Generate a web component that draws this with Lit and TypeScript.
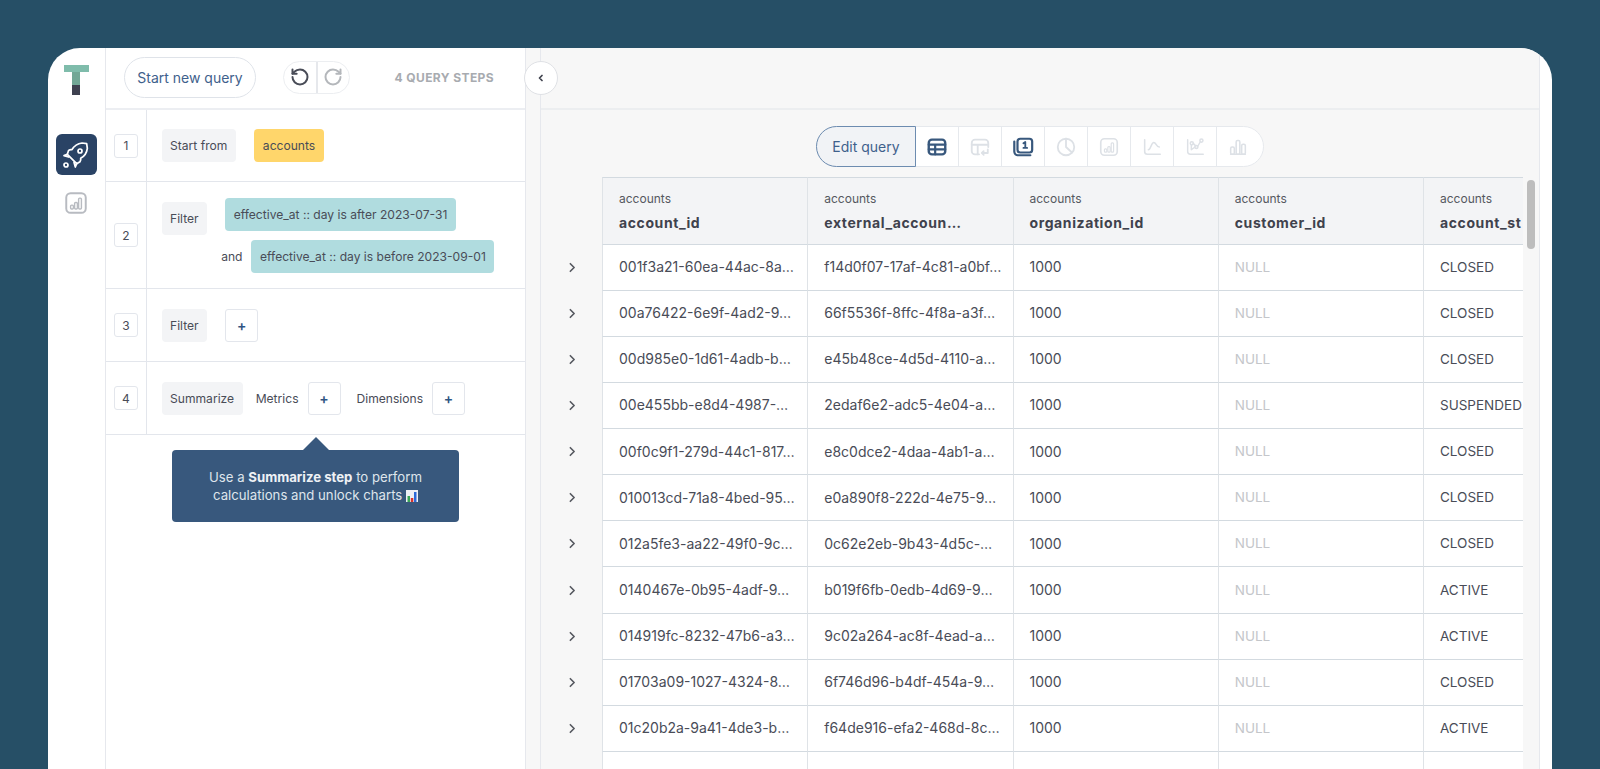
import { LitElement, html, css, svg } from "lit";
import { customElement } from "lit/decorators.js";

const rows: [string, string, string][] = [
  ["001f3a21-60ea-44ac-8a…", "f14d0f07-17af-4c81-a0bf…", "CLOSED"],
  ["00a76422-6e9f-4ad2-9…", "66f5536f-8ffc-4f8a-a3f…", "CLOSED"],
  ["00d985e0-1d61-4adb-b…", "e45b48ce-4d5d-4110-a…", "CLOSED"],
  ["00e455bb-e8d4-4987-…", "2edaf6e2-adc5-4e04-a…", "SUSPENDED"],
  ["00f0c9f1-279d-44c1-817…", "e8c0dce2-4daa-4ab1-a…", "CLOSED"],
  ["010013cd-71a8-4bed-95…", "e0a890f8-222d-4e75-9…", "CLOSED"],
  ["012a5fe3-aa22-49f0-9c…", "0c62e2eb-9b43-4d5c-…", "CLOSED"],
  ["0140467e-0b95-4adf-9…", "b019f6fb-0edb-4d69-9…", "ACTIVE"],
  ["014919fc-8232-47b6-a3…", "9c02a264-ac8f-4ead-a…", "ACTIVE"],
  ["01703a09-1027-4324-8…", "6f746d96-b4df-454a-9…", "CLOSED"],
  ["01c20b2a-9a41-4de3-b…", "f64de916-efa2-468d-8c…", "ACTIVE"],
  ["", "", ""],
];
const heads = ["account_id", "external_accoun…", "organization_id", "customer_id", "account_st"];

const ic = (body: unknown, cls = "", size = 20) =>
  html`<svg class=${cls} width=${size} height=${size} viewBox="0 0 24 24" fill="none" stroke="currentColor" stroke-width="2" stroke-linecap="round" stroke-linejoin="round">${body}</svg>`;

const rocket = svg`<path stroke-width="1.300" d="M5.500 11.500l7 7l2.500-1.500a3 3 0 0 0 .500-2.500a10 10 0 0 0 5-7.500l-.500-3.500l-3.500-.500a10 10 0 0 0-7.500 5a3 3 0 0 0-2.500.500z"/><path stroke-width="1.300" d="M5.500 11.500L3 12.500l3.500 1M12.500 18.500l-1 2.500l-1-3.500"/><circle stroke-width="1.300" cx="15" cy="9" r="1.500"/><circle stroke-width="1.300" cx="4.500" cy="19.500" r="1.500"/>`;
const boxChart = svg`<rect x="3" y="3" width="18" height="18" rx="4" stroke-width="1.800"/><rect x="7" y="14" width="2.600" height="3.500" rx="1" stroke-width="1.300"/><rect x="10.700" y="11.500" width="2.600" height="6" rx="1" stroke-width="1.300"/><rect x="14.400" y="7.500" width="2.600" height="10" rx="1" stroke-width="1.300"/>`;
const undo = svg`<path d="M3 12a9 9 0 1 0 9-9 9.750 9.750 0 0 0-6.740 2.740L3 8" stroke-width="2.400"/><path d="M3 3v5h5" stroke-width="2.400"/>`;
const redo = svg`<path d="M21 12a9 9 0 1 1-9-9 9.750 9.750 0 0 1 6.740 2.740L21 8" stroke-width="2.400"/><path d="M21 3v5h-5" stroke-width="2.400"/>`;
const tableIc = svg`<rect x="3" y="4" width="18" height="16" rx="3.500" stroke-width="2.600"/><path d="M3 9.500h18M3 14.500h18M10 9.500V20" stroke-width="2.400"/>`;
const pivot = svg`<path d="M11 20H6.500A3.500 3.500 0 0 1 3 16.500V7.500A3.500 3.500 0 0 1 6.500 4h11A3.500 3.500 0 0 1 21 7.500V12"/><path d="M3 9.500h18M9.500 9.500V20"/><path d="M14 18.500h6.500M20.500 14.500v4M14 18.500l2-2M14 18.500l2 2"/>`;
const counter = svg`<rect x="6" y="3" width="16" height="15" rx="3" stroke-width="2.400"/><path d="M2.500 6v11a4 4 0 0 0 4 4H20" stroke-width="2.400"/><path d="M12.500 8l2-1.500V13M12.500 13h4" stroke-width="2"/>`;
const pie = svg`<circle cx="12" cy="12" r="9"/><path d="M12 3v9l6.500 6"/>`;
const line = svg`<path d="M4 4v13a3 3 0 0 0 3 3h14" stroke-width="1.700"/><path d="M8 15c3 0 3-8 6-8c2.500 0 2.500 5 6 5" stroke-width="1.700"/>`;
const scatter = svg`<g stroke-width="1.600"><path d="M4 4v13a3 3 0 0 0 3 3h14"/><path d="M8 10v5l4-3M10 8l2.500 2.500M14.500 12l3.500-6"/><circle cx="8.500" cy="8" r="1.700"/><circle cx="13.500" cy="12" r="1.700"/><circle cx="19" cy="5" r="1.700"/></g>`;
const bars = svg`<path d="M4 20h16" stroke-width="1.700"/><g stroke-width="1.700"><rect x="4" y="12" width="4" height="8" rx="1.500"/><rect x="10" y="5" width="4" height="15" rx="1.500"/><rect x="16" y="9" width="4" height="11" rx="1.500"/></g>`;
const chev = svg`<path d="M8 5l7 7-7 7" stroke-width="3"/>`;

@customElement("app-root")
export class AppRoot extends LitElement {
  static styles = css`
    :host {
      display: block;
      height: 769px;
      overflow: hidden;
      box-sizing: border-box;
      padding: 48px 48px 0;
      background: #264f66;
      font-family: "Inter", "Noto Sans", sans-serif;
      color: #494c57;
    }
    .card {
      position: relative;
      display: flex;
      height: 721px;
      background: #fff;
      border-radius: 32px 32px 0 0;
      overflow: hidden;
    }
    .side {
      flex: none;
      width: 57px;
      border-right: 1px solid #e6e8ed;
      display: flex;
      flex-direction: column;
      align-items: center;
      padding-top: 17px;
      box-sizing: content-box;
    }
    .logo {
      display: flex;
      flex-direction: column;
      align-items: center;
      margin-left: -1px;
    }
    .logo-top { width: 25px; height: 7px; background: #7fbcab; }
    .logo-mid { width: 8px; height: 13px; background: #72a796; }
    .logo-bot { width: 8px; height: 10px; background: #3e4150; }
    .tile {
      width: 41px;
      height: 41px;
      margin-top: 39px;
      margin-left: -1px;
      background: #2a4365;
      border-radius: 6px;
      color: #fff;
      display: flex;
      align-items: center;
      justify-content: center;
    }
    .chart { margin-top: 15px; margin-left: -1px; color: #b8bbc1; display: block; }
    .left {
      flex: none;
      width: 419px;
      border-right: 1px solid #e6e8ed;
    }
    .lhead {
      height: 62px;
      box-sizing: border-box;
      border-bottom: 2px solid #eceef2;
      display: flex;
      align-items: center;
      padding: 0 31px 2px 18px;
    }
    .start {
      height: 41px;
      width: 132px;
      box-sizing: border-box;
      border: 1px solid #dfe3e9;
      border-radius: 21px;
      color: #3f618c;
      font-size: 14px;
      display: flex;
      align-items: center;
      justify-content: center;
    }
    .hist {
      margin-left: 27px;
      display: flex;
      height: 33px;
      width: 67px;
      box-sizing: border-box;
      border: 1px solid #eceef1;
      border-radius: 17px;
    }
    .hist span {
      flex: 1;
      display: flex;
      align-items: center;
      justify-content: center;
    }
    .hist span + span { border-left: 2px solid #e6e8ec; color: #b4b7bb; }
    .count {
      margin-left: auto;
      font-size: 12px;
      font-weight: 700;
      color: #a8abb0;
      letter-spacing: 0.400px;
    }
    .step {
      display: flex;
      border-bottom: 1px solid #e3e6ec;
      box-sizing: border-box;
    }
    .h73 { height: 73px; }
    .h72 { height: 72px; }
    .h107 { height: 107px; }
    .num {
      flex: none;
      width: 41px;
      border-right: 1px solid #e3e6ec;
      display: flex;
      align-items: center;
      padding-left: 8px;
      box-sizing: border-box;
    }
    .num span {
      width: 24px;
      height: 24px;
      box-sizing: border-box;
      border: 1px solid #e3e6ec;
      border-radius: 3px;
      font-size: 12px;
      display: flex;
      align-items: center;
      justify-content: center;
    }
    .body {
      display: flex;
      align-items: center;
      padding-left: 14.500px;
      font-size: 12.100px;
    }
    .chip {
      height: 33px;
      padding: 0 8.500px;
      box-sizing: border-box;
      border-radius: 4px;
      display: flex;
      align-items: center;
      white-space: nowrap;
    }
    .grey { background: #f3f4f6; }
    .yellow { background: #ffd66b; margin-left: 18px; padding: 0 9px; }
    .teal { background: #b0dcdf; }
    .plus {
      width: 33px;
      height: 33px;
      box-sizing: border-box;
      border: 1px solid #e3e6ec;
      border-radius: 3px;
      color: #2f5583;
      font-size: 14px;
      font-weight: 600;
      display: flex;
      align-items: center;
      justify-content: center;
    }
    .gap19 { margin-left: 18px; }
    .filters {
      display: flex;
      flex-direction: column;
      align-items: flex-start;
      gap: 9px;
      margin-left: 18px;
    }
    .filters .and-row { display: flex; align-items: center; gap: 9px; margin-left: -4px; }
    .up { align-self: flex-start; margin-top: 20px; }
    .lab { margin-left: 13px; margin-right: 9px; }
    .lab2 { margin-left: 16px; }
    .tip {
      position: relative;
      margin: 15px 0 0 66px;
      width: 287px;
      height: 72px;
      box-sizing: border-box;
      background: #38587d;
      border-radius: 4px;
      color: #dfe5ec;
      font-size: 13.200px;
      line-height: 18px;
      text-align: center;
      padding-top: 18px;
    }
    .tip::before {
      content: "";
      position: absolute;
      left: 131px;
      top: -13px;
      border-left: 13px solid transparent;
      border-right: 13px solid transparent;
      border-bottom: 13px solid #38587d;
    }
    .tip b { color: #eef1f5; font-weight: 700; }
    .tip svg { vertical-align: -2px; }
    .gutter {
      flex: none;
      width: 14px;
      background: #f7f7f7;
      border-right: 1px solid #e6e8ed;
    }
    .main {
      flex: none;
      width: 998px;
      background: #f7f7f7;
      border-right: 1px solid #e6e8ed;
      min-width: 0;
    }
    .mtop { height: 62px; box-sizing: border-box; border-bottom: 2px solid #eceef0; }
    .tools {
      margin: 16px 0 0 275px;
      width: 448px;
      height: 41px;
      display: flex;
      box-sizing: border-box;
      background: #fff;
      border: 1px solid #e6e9ed;
      border-radius: 21px;
    }
    .edit {
      width: 100px;
      flex: none;
      margin: -1px 0 -1px -1px;
      box-sizing: border-box;
      border: 1.500px solid #6d8cb0;
      border-radius: 21px 0 0 21px;
      background: #f1f3f6;
      color: #3f618c;
      font-size: 14px;
      display: flex;
      align-items: center;
      justify-content: center;
    }
    .tool {
      width: 43px;
      flex: none;
      box-sizing: border-box;
      display: flex;
      align-items: center;
      justify-content: center;
      color: #dde1e6;
      border-right: 1px solid #e6e9ed;
    }
    .tool:last-child { border-right: 0; flex: 1; padding-right: 4px; }
    .tool.on { color: #38587d; }
    .tarea { display: flex; margin-top: 10px; }
    .table { width: 982px; overflow: hidden; flex: none; }
    .tr {
      display: grid;
      grid-template-columns: 61px repeat(5, 205.250px);
      height: 46.150px;
    }
    .tr.hd { height: 67.500px; }
    .td {
      box-sizing: border-box;
      border-left: 1.500px solid #dfe3e7;
      border-bottom: 1.500px solid #d3dae0;
      background: #fff;
      padding: 0 0 1px 16px;
      font-size: 14px;
      display: flex;
      align-items: center;
      white-space: nowrap;
      overflow: hidden;
    }
    .small { font-size: 13.500px; }
    .null { color: #c4c6ca; }
    .th {
      box-sizing: border-box;
      background: #f3f4f6;
      border-left: 1.500px solid #dfe3e7;
      border-top: 1px solid #d3dae0;
      border-bottom: 1.500px solid #d3dae0;
      padding: 12px 0 0 16px;
      white-space: nowrap;
      overflow: hidden;
    }
    .tb { font-size: 12px; line-height: 18px; color: #55585f; }
    .tn { font-size: 14px; line-height: 20px; margin-top: 5px; font-weight: 700; color: #3f424d; letter-spacing: 0.600px; }
    .exp { display: flex; align-items: center; justify-content: center; padding: 0 0 1px 2px; color: #55585f; }
    .track { flex: none; width: 16px; padding: 3px 0 0 4px; box-sizing: border-box; }
    .thumb { width: 8px; height: 69px; border-radius: 4px; background: #bdbdbd; }
    .collapse {
      position: absolute;
      left: 476px;
      top: 13px;
      width: 34px;
      height: 34px;
      box-sizing: border-box;
      border: 1px solid #dfe1e5;
      border-radius: 50%;
      background: #fff;
      color: #3f424d;
      display: flex;
      align-items: center;
      justify-content: center;
    }
  `;

  render() {
    return html`<div class="card">
      <nav class="side">
        <div class="logo"><div class="logo-top"></div><div class="logo-mid"></div><div class="logo-bot"></div></div>
        <div class="tile">${ic(rocket, "", 32)}</div>
        ${ic(boxChart, "chart", 26)}
      </nav>
      <section class="left">
        <header class="lhead">
          <div class="start">Start new query</div>
          <div class="hist"><span>${ic(undo)}</span><span>${ic(redo)}</span></div>
          <div class="count">4 QUERY STEPS</div>
        </header>
        <div class="step h72">
          <div class="num"><span>1</span></div>
          <div class="body"><div class="chip grey">Start from</div><div class="chip yellow">accounts</div></div>
        </div>
        <div class="step h107">
          <div class="num"><span>2</span></div>
          <div class="body">
            <div class="chip grey up">Filter</div>
            <div class="filters">
              <div class="chip teal">effective_at :: day is after 2023-07-31</div>
              <div class="and-row"><span>and</span><div class="chip teal">effective_at :: day is before 2023-09-01</div></div>
            </div>
          </div>
        </div>
        <div class="step h73">
          <div class="num"><span>3</span></div>
          <div class="body"><div class="chip grey">Filter</div><div class="plus gap19">+</div></div>
        </div>
        <div class="step h73">
          <div class="num"><span>4</span></div>
          <div class="body">
            <div class="chip grey">Summarize</div><span class="lab">Metrics</span><div class="plus">+</div>
            <span class="lab lab2">Dimensions</span><div class="plus">+</div>
          </div>
        </div>
        <div class="tip">Use a <b>Summarize step</b> to perform<br />calculations and unlock charts
          <svg width="12" height="12" viewBox="0 0 12 12"><rect width="12" height="12" fill="#eef1f5"/><rect x="1.500" y="6" width="2.500" height="6" fill="#3aa655"/><rect x="4.800" y="8" width="2.500" height="4" fill="#d8342c"/><rect x="8" y="2" width="2.500" height="10" fill="#2c6ad8"/></svg>
        </div>
      </section>
      <div class="gutter"></div>
      <main class="main">
        <div class="mtop"></div>
        <div class="tools">
          <div class="edit">Edit query</div>
          <div class="tool on">${ic(tableIc, "", 22)}</div>
          <div class="tool">${ic(pivot, "", 22)}</div>
          <div class="tool on">${ic(counter, "", 22)}</div>
          <div class="tool">${ic(pie, "", 22)}</div>
          <div class="tool">${ic(boxChart, "", 22)}</div>
          <div class="tool">${ic(line, "", 22)}</div>
          <div class="tool">${ic(scatter, "", 22)}</div>
          <div class="tool">${ic(bars, "", 22)}</div>
        </div>
        <div class="tarea">
          <div class="table">
            <div class="tr hd">
              <div></div>
              ${heads.map((h) => html`<div class="th"><div class="tb">accounts</div><div class="tn">${h}</div></div>`)}
            </div>
            ${rows.map(
              (r) => html`<div class="tr">
                <div class="exp">${r[0] ? ic(chev, "", 13) : ""}</div>
                <div class="td">${r[0]}</div>
                <div class="td">${r[1]}</div>
                <div class="td">${r[0] ? "1000" : ""}</div>
                <div class="td small null">${r[0] ? "NULL" : ""}</div>
                <div class="td small">${r[2]}</div>
              </div>`
            )}
          </div>
          <div class="track"><div class="thumb"></div></div>
        </div>
      </main>
      <div class="collapse">${ic(svg`<path d="M14 7l-5 5 5 5" stroke-width="3.500"/>`, "", 12)}</div>
    </div>`;
  }
}
